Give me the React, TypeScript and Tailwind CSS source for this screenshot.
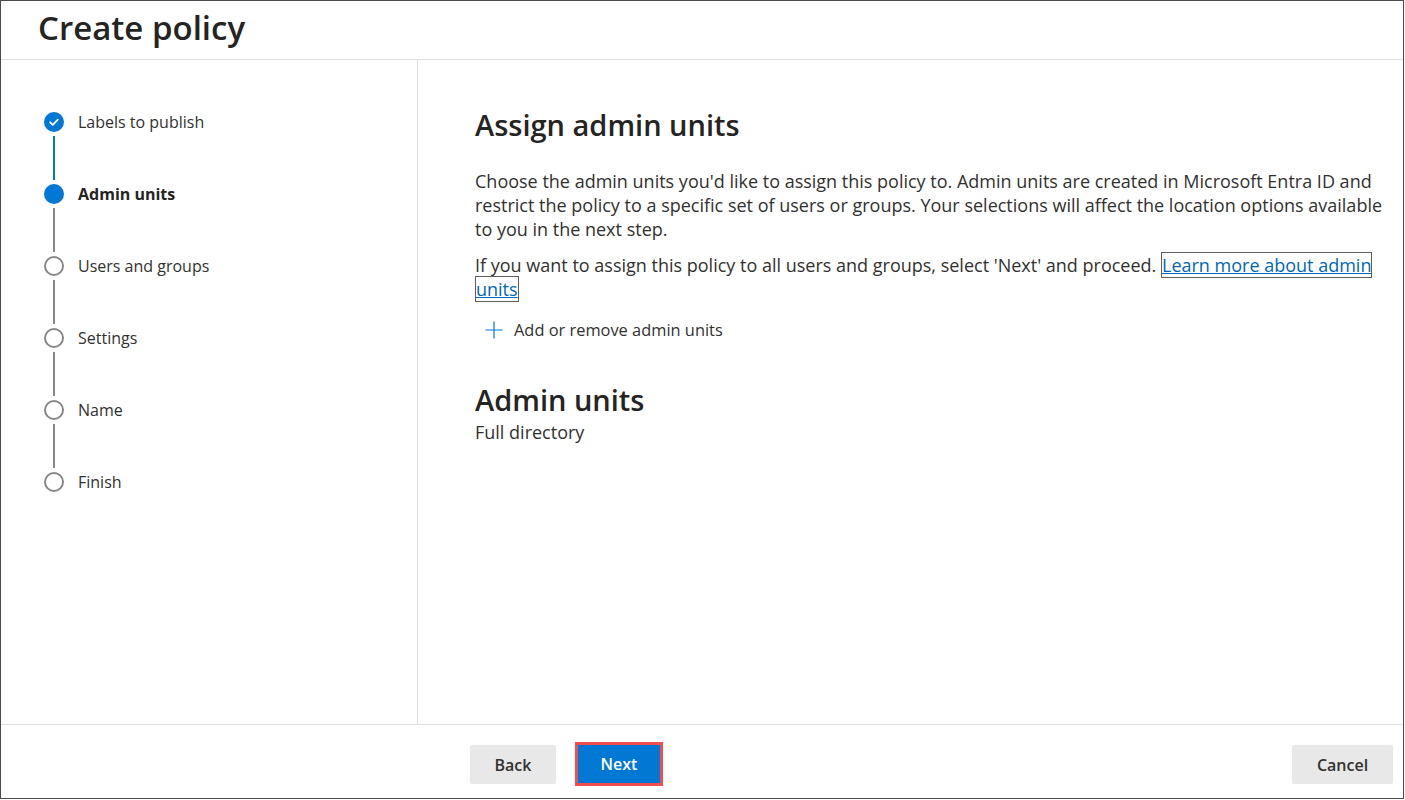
import React from "react";

const font = { fontFamily: '"Open Sans", "Noto Sans", sans-serif' };

function CheckCircle() {
  return (
    <div className="w-[20px] h-[20px] rounded-full bg-[#0078d4] flex items-center justify-center">
      <svg width="12" height="12" viewBox="0 0 12 12">
        <path d="M2.2 6.3 L4.8 8.8 L9.8 3.6" fill="none" stroke="white" strokeWidth="1.8" strokeLinecap="round" strokeLinejoin="round" />
      </svg>
    </div>
  );
}

const steps = [
  { label: "Labels to publish", state: "done" },
  { label: "Admin units", state: "current" },
  { label: "Users and groups", state: "todo" },
  { label: "Settings", state: "todo" },
  { label: "Name", state: "todo" },
  { label: "Finish", state: "todo" },
];

function Stepper() {
  return (
    <div className="flex flex-col pl-[43px] pt-[52px]">
      {steps.map((s, i) => (
        <div key={s.label} className="flex flex-col">
          <div className="flex items-center h-[20px]">
            {s.state === "done" ? (
              <CheckCircle />
            ) : s.state === "current" ? (
              <div className="w-[20px] h-[20px] rounded-full bg-[#0078d4]" />
            ) : (
              <div className="w-[20px] h-[20px] rounded-full border-2 border-[#8a8886] bg-white" />
            )}
            <span
              className={`ml-[14px] text-[16px] leading-[20px] ${
                s.state === "current" ? "font-bold text-[#252423]" : "font-normal text-[#323130]"
              }`}
            >
              {s.label}
            </span>
          </div>
          {i < steps.length - 1 && (
            <div className="w-[20px] flex justify-center py-[4px]">
              <div
                className={`w-[2px] h-[44px] ${i === 0 ? "bg-[#0078d4]" : "bg-[#8a8886]"}`}
              />
            </div>
          )}
        </div>
      ))}
    </div>
  );
}

export default function App() {
  return (
    <div className="w-[1405px] h-[800px] bg-white" style={font}>
      <div className="w-[1404px] h-[799px] border border-[#4b4b4b] flex flex-col">
        <div className="h-[59px] border-b border-[#e1dfdd] flex items-center pl-[37px] shrink-0">
          <h1 className="text-[33px] font-semibold text-[#252423] leading-none -mt-[6px]">Create policy</h1>
        </div>
        <div className="flex flex-1 min-h-0">
          <div className="w-[417px] border-r border-[#e1dfdd] shrink-0">
            <Stepper />
          </div>
          <div className="flex-1 pl-[57px] pr-[14px] pt-[47px] text-[#323130]">
            <h2 className="text-[29px] font-semibold leading-[36px] text-[#252423]">Assign admin units</h2>
            <p className="mt-[26px] text-[18px] leading-[24px]">
              Choose the admin units you'd like to assign this policy to. Admin units are created in Microsoft Entra ID and restrict the policy to a specific set of users or groups. Your selections will affect the location options available to you in the next step.
            </p>
            <p className="mt-[12px] text-[18px] leading-[24px]">
              If you want to assign this policy to all users and groups, select 'Next' and proceed.{" "}
              <a className="text-[#0067b8] underline border border-[#605e5c] box-decoration-clone" href="#">
                Learn more about admin units
              </a>
            </p>
            <div className="mt-[17px] flex items-center h-[24px] pl-[10px]">
              <svg width="18" height="18" viewBox="0 0 18 18">
                <path d="M9 0.5 V17.5 M0.5 9 H17.5" stroke="#0078d4" strokeWidth="1.2" fill="none" />
              </svg>
              <span className="ml-[11px] text-[16.4px] text-[#323130]">Add or remove admin units</span>
            </div>
            <h2 className="mt-[40px] text-[29px] font-semibold leading-[36px] text-[#252423]">Admin units</h2>
            <div className="text-[18px] leading-[24px] mt-[2px]">Full directory</div>
          </div>
        </div>
        <div className="h-[74px] border-t border-[#e1dfdd] shrink-0 flex items-start pt-[17px] pl-[469px] pr-[10px]">
          <button className="mt-[3px] w-[86px] h-[39px] bg-[#e8e8e8] rounded-[2px] text-[16px] font-semibold text-[#323130]">Back</button>
          <div className="ml-[19px] border-[3px] border-[#f04e4e]">
            <button className="w-[82px] h-[38px] bg-[#0078d4] text-[16px] font-semibold text-white block">Next</button>
          </div>
          <div className="flex-1" />
          <button className="mt-[3px] w-[101px] h-[39px] bg-[#e8e8e8] rounded-[2px] text-[16px] font-semibold text-[#323130]">Cancel</button>
        </div>
      </div>
    </div>
  );
}
